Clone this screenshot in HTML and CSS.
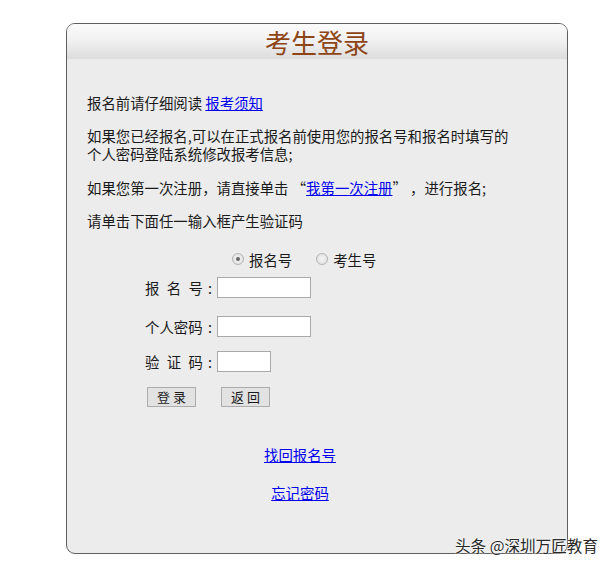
FILE: index.html
```html
<!DOCTYPE html>
<html lang="zh-CN">
<head>
<meta charset="utf-8">
<title>考生登录</title>
<link rel="stylesheet" href="styles.css">
</head>
<body>
<div class="panel">
  <div class="head"><h1 class="title">考生登录</h1></div>
  <div class="content">
    <p class="p1">报名前请仔细阅读 <a href="#" class="link">报考须知</a></p>
    <p class="p2"><span class="ln">如果您已经报名,可以在正式报名前使用您的报名号和报名时填写的</span><span class="ln">个人密码登陆系统修改报考信息;</span></p>
    <p class="p3">如果您第一次注册，请直接单击 “<a href="#" class="link">我第一次注册</a>” ，进行报名;</p>
    <p class="p4">请单击下面任一输入框产生验证码</p>
    <form class="form">
      <div class="radios">
        <label class="radio"><span class="dot checked"></span>报名号</label>
        <label class="radio"><span class="dot"></span>考生号</label>
      </div>
      <div class="row r1"><span class="label spread"><span>报</span><span>名</span><span>号</span></span><span class="colon">:</span><span class="field wide"></span></div>
      <div class="row r2"><span class="label">个人密码</span><span class="colon">:</span><span class="field wide"></span></div>
      <div class="row r3"><span class="label spread"><span>验</span><span>证</span><span>码</span></span><span class="colon">:</span><span class="field short"></span></div>
      <div class="buttons">
        <span class="btn">登 录</span>
        <span class="btn">返 回</span>
      </div>
    </form>
    <div class="links">
      <a href="#" class="link">找回报名号</a>
      <a href="#" class="link">忘记密码</a>
    </div>
  </div>
</div>
<div class="watermark">头条 @深圳万匠教育</div>
</body>
</html>
```
FILE: styles.css
```css
html, body {
  margin: 0;
  padding: 0;
  background: #ffffff;
}
body {
  font-family: "Noto Sans CJK SC", "Noto Sans", sans-serif;
  font-size: 14.4px;
  color: #1a1a1a;
  position: relative;
  width: 611px;
  height: 566px;
  overflow: hidden;
}
.panel {
  margin: 23px 0 0 66px;
  width: 500px;
  height: 529px;
  border: 1px solid #5f5f5f;
  border-radius: 9px;
  background: #ececec;
  overflow: hidden;
}
.head {
  height: 35px;
  background: linear-gradient(#fbfbfb, #f0f0f0 50%, #dcdcdc);
  display: flex;
  align-items: center;
  justify-content: center;
}
.title {
  margin: 0;
  font-size: 26px;
  font-weight: normal;
  color: #8e4516;
  line-height: 35px;
}
.content {
  padding: 35px 0 0 20px;
}
p {
  margin: 0;
  line-height: 18px;
}
.ln {
  display: block;
  height: 18px;
  line-height: 18px;
}
.p2 { margin-top: 15px; }
.p3 { margin-top: 16px; }
.p4 { margin-top: 15px; }
.link {
  color: #0000ee;
  text-decoration: underline;
}
.form {
  margin: 0;
}
.radios {
  display: flex;
  gap: 24px;
  padding-left: 145px;
  margin-top: 20px;
  height: 18px;
  align-items: center;
}
.radio {
  display: flex;
  align-items: center;
  gap: 5px;
}
.dot {
  width: 12px;
  height: 12px;
  border-radius: 50%;
  border: 1px solid #b3b3b3;
  background: radial-gradient(#f6f6f6, #dcdcdc);
  box-sizing: border-box;
  position: relative;
}
.dot.checked::after {
  content: "";
  position: absolute;
  left: 3px;
  top: 3px;
  width: 4px;
  height: 4px;
  border-radius: 50%;
  background: #666;
}
.row {
  display: flex;
  align-items: center;
  padding-left: 58px;
}
.r1 { margin-top: 9px; }
.r2 { margin-top: 18px; }
.r3 { margin-top: 14px; }
.label {
  width: 58px;
  white-space: nowrap;
}
.spread {
  display: flex;
  justify-content: space-between;
}
.colon {
  width: 14px;
  text-align: center;
}
.field {
  display: block;
  height: 19px;
  border: 1px solid #a9a9a9;
  background: #fff;
}
.wide { width: 92px; }
.short { width: 52px; }
.buttons {
  display: flex;
  gap: 25px;
  padding-left: 60px;
  margin-top: 15px;
}
.btn {
  width: 47px;
  height: 18px;
  border: 1px solid #acacac;
  background: #e2e2e2;
  font-size: 13px;
  line-height: 18px;
  text-align: center;
}
.links {
  width: 426px;
  display: flex;
  flex-direction: column;
  align-items: center;
  gap: 20px;
  margin-top: 39px;
}
.links .link {
  line-height: 18px;
}
.watermark {
  position: absolute;
  left: 455px;
  top: 535px;
  font-size: 15.6px;
  line-height: 20px;
  color: #2a2a2a;
  text-shadow: 0 0 2px #fff, 0 0 2px #fff;
}
```
